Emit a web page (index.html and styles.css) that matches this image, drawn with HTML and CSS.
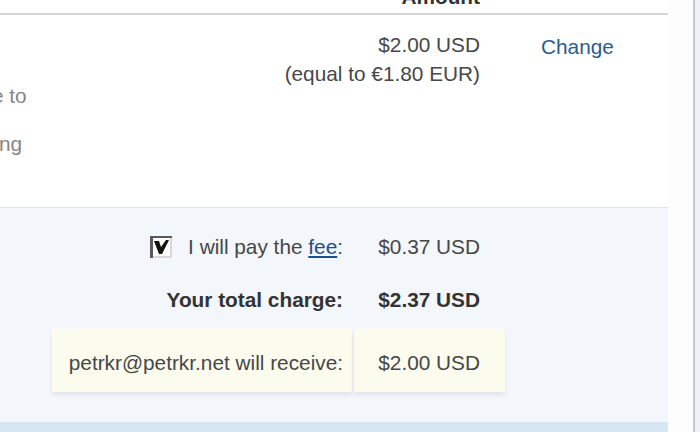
FILE: index.html
```html
<!DOCTYPE html>
<html>
<head>
<meta charset="utf-8">
<link rel="stylesheet" href="styles.css">
</head>
<body>
<div class="frame">
  <div class="main">
    <div class="panel">
      <div class="head">
        <div class="head-amount">Amount</div>
      </div>
      <div class="details">
        <div class="desc">
          <p class="frag frag-a">e to</p>
          <p class="frag frag-b">ng</p>
        </div>
        <div class="amount">
          <div>$2.00 USD</div>
          <div>(equal to €1.80 EUR)</div>
        </div>
        <div class="action"><a class="link" href="#">Change</a></div>
      </div>
      <div class="summary">
        <div class="row fee-row">
          <div class="label">
            <span class="check" aria-hidden="true">
              <svg width="22" height="22" viewBox="0 0 22 22">
                <rect x="0" y="0" width="22" height="22" fill="#d9d9d9"/>
                <rect x="0" y="0" width="22" height="2" fill="#5a5a5a"/>
                <rect x="0" y="0" width="3" height="22" fill="#5a5a5a"/>
                <rect x="3" y="2" width="17" height="18" fill="#fff"/>
                <polygon points="4,5 9,5 11,11 16,4 19,4 12,18 9,18" fill="#111"/>
              </svg>
            </span>
            <span>I will pay the <a class="link ul" href="#">fee</a>:</span>
          </div>
          <div class="value">$0.37 USD</div>
        </div>
        <div class="row total-row">
          <div class="label">Your total charge:</div>
          <div class="value">$2.37 USD</div>
        </div>
        <div class="row receive-row">
          <div class="label cell">petrkr@petrkr.net will receive:</div>
          <div class="value cell">$2.00 USD</div>
        </div>
      </div>
      <div class="bar"></div>
    </div>
    <div class="gutter"></div>
  </div>
  <div class="rule"></div>
  <div class="outside"></div>
</div>
</body>
</html>
```

FILE: styles.css
```css
html, body {
  margin: 0;
  padding: 0;
  height: 100%;
  overflow: hidden;
}
body {
  font-family: "Liberation Sans", Arial, sans-serif;
  font-size: 20.8px;
  color: #474747;
  background: #ffffff;
}
.frame {
  display: flex;
  height: 432px;
}
.main {
  display: flex;
  width: 693px;
}
.panel {
  width: 668px;
  display: flex;
  flex-direction: column;
}
.gutter {
  flex: 1;
  background: #fdfdfe;
}
.rule {
  width: 2px;
  background: #c3c8d1;
}
.outside {
  flex: 1;
  background: #eef2f8;
}
.head {
  height: 13px;
  border-bottom: 2px solid #d4d4d4;
  overflow: hidden;
  display: flex;
}
.head-amount {
  width: 480px;
  text-align: right;
  font-weight: bold;
  line-height: 20px;
  margin-top: -13px;
  color: #333;
}
.details {
  height: 192px;
  display: flex;
  background: #fff;
}
.desc {
  width: 40px;
  padding-top: 69px;
  color: #858585;
  line-height: 24px;
  overflow: hidden;
}
.frag {
  margin: 0 0 24px 0;
  white-space: nowrap;
}
.frag-a {
  text-indent: -8px;
}
.frag-b {
  text-indent: -1px;
}
.amount {
  width: 440px;
  text-align: right;
  padding-top: 15px;
  line-height: 29px;
}
.action {
  padding-top: 17px;
  padding-left: 61px;
  line-height: 29px;
}
.link {
  color: #2c5b8e;
  text-decoration: none;
}
.link.ul {
  color: #1d4f89;
  text-decoration: underline;
}
.summary {
  border-top: 1px solid #e0e5eb;
  background: #f3f6fa;
  height: 215px;
  padding-top: 24px;
  box-sizing: border-box;
  display: flex;
  flex-direction: column;
}
.row {
  display: flex;
  margin-left: 52px;
  width: 453px;
  gap: 2px;
  line-height: 29px;
}
.label {
  width: 300px;
  box-sizing: border-box;
  padding-right: 9px;
  text-align: right;
  display: flex;
  justify-content: flex-end;
  align-items: center;
  white-space: nowrap;
}
.value {
  flex: 1;
  box-sizing: border-box;
  padding-right: 25px;
  text-align: right;
  white-space: nowrap;
}
.check {
  display: inline-flex;
  width: 22px;
  height: 22px;
  margin-right: 16px;
  margin-top: 1px;
}
.total-row {
  margin-top: 24px;
  font-weight: bold;
  color: #333;
}
.receive-row {
  margin-top: 15px;
}
.cell {
  background: #fcfcee;
  padding-top: 19px;
  padding-bottom: 15px;
  box-shadow: 0 3px 4px rgba(0, 0, 0, 0.08);
}
.bar {
  flex: 1;
  background: #d6e7f3;
}
```
